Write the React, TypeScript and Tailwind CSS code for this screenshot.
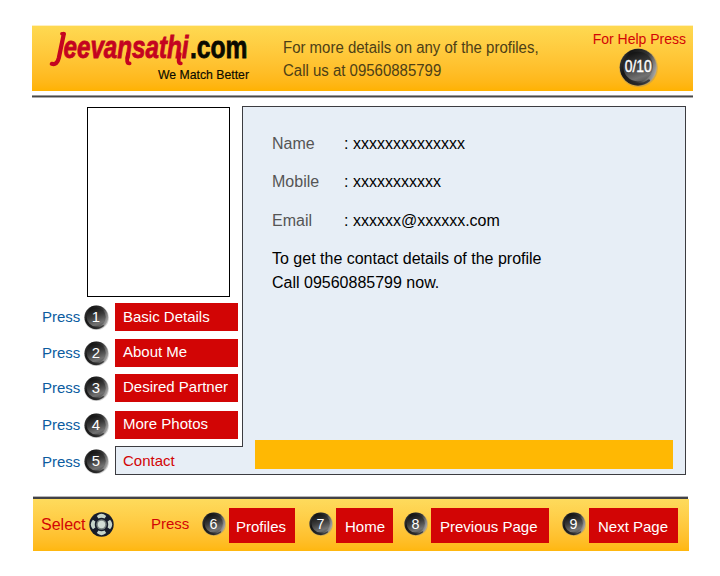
import React from "react";

const rows = [
  { n: "1", label: "Basic Details", gap: "mt-1.5", text: "leading-7" },
  { n: "2", label: "About Me", gap: "mt-2", text: "leading-[26px]" },
  { n: "3", label: "Desired Partner", gap: "mt-[7px]", text: "leading-[26px]" },
  { n: "4", label: "More Photos", gap: "mt-[9px]", text: "leading-[26px]" },
];

const details = [
  { label: "Name", value: "xxxxxxxxxxxxxx", height: "h-[38px]" },
  { label: "Mobile", value: "xxxxxxxxxxx", height: "h-[39px]" },
  { label: "Email", value: "xxxxxx@xxxxxx.com", height: "h-[38px]" },
];

const actions = [
  { n: "6", label: "Profiles", gap: "ml-3", inner: "w-[66px] pl-[7px]" },
  { n: "7", label: "Home", gap: "ml-3.5", inner: "w-[57px] pl-[9px]" },
  { n: "8", label: "Previous Page", gap: "ml-[11px]", inner: "w-[118px] pl-[9px]" },
  { n: "9", label: "Next Page", gap: "ml-[13px]", inner: "w-[89px] pl-[9px]" },
];

function Knob({ n, size = 25 }: { n: string; size?: number }) {
  const help = size > 30;
  return (
    <svg width={size} height={size} viewBox="0 0 26 26" className="block shrink-0 overflow-visible">
      <defs>
        <linearGradient id={`rim${n}`} x1="0" y1="0.25" x2="1" y2="0.6">
          <stop offset="0" stopColor="#3c3c3c" />
          <stop offset="0.2" stopColor="#151515" />
          <stop offset="0.65" stopColor="#333" />
          <stop offset="1" stopColor="#aaa" />
        </linearGradient>
        <linearGradient id={`face${n}`} x1="0.3" y1="0" x2="0.65" y2="1">
          <stop offset="0" stopColor="#111" />
          <stop offset="0.45" stopColor="#3b3b3b" />
          <stop offset="0.85" stopColor="#727272" />
          <stop offset="1" stopColor="#5a5a5a" />
        </linearGradient>
      </defs>
      <circle cx="13" cy="13.2" r="12.9" fill="#888" opacity="0.35" />
      <circle cx="12.8" cy="12.8" r="12.3" fill={`url(#rim${n})`} />
      <path d="M5.5 21.6A11.6 11.6 0 0 0 20 21.6" fill="none" stroke="#222" strokeWidth="1.4" strokeLinecap="round" opacity="0.7" />
      <circle cx="12.7" cy="12.4" r="9.9" fill={`url(#face${n})`} />
      {help ? (
        <text x="12.8" y="16.3" textAnchor="middle" textLength="18" lengthAdjust="spacingAndGlyphs" fill="#fff" stroke="#fff" strokeWidth="0.25" fontSize="11">
          {n}
        </text>
      ) : (
        <text x="12.3" y="18" textAnchor="middle" fill="#fff" fontSize="15.5">
          {n}
        </text>
      )}
    </svg>
  );
}

function Logo() {
  return (
    <svg width="215" height="66" viewBox="32 25 215 66" className="block shrink-0 overflow-visible">
      <g fill="none" stroke="#c40420" strokeLinecap="round" strokeLinejoin="round">
        <path d="M63.8 34 58.8 58Q57 65.5 51.8 63.8" strokeWidth="4.2" />
        <path d="M61.8 33.7H64" strokeWidth="3.4" />
        <path d="M128 54Q125.5 63.6 129.6 63.4" strokeWidth="3.8" />
        <path d="M179.8 54Q177 63.6 180.8 63.4" strokeWidth="3.8" />
      </g>
      <g fontWeight="700" fontSize="31" strokeWidth="0.8">
        <text x="63.5" y="57.6" fontStyle="italic" fill="#c40420" stroke="#c40420" textLength="125" lengthAdjust="spacingAndGlyphs">
          eevansathi
        </text>
        <text x="190" y="57.6" fill="#0a0a00" textLength="57.5" lengthAdjust="spacingAndGlyphs" stroke="#0a0a00">
          .com
        </text>
      </g>
      <text x="158" y="79" fontSize="13" fill="#0a0a00" stroke="#0a0a00" strokeWidth="0.15" textLength="91" lengthAdjust="spacingAndGlyphs">
        We Match Better
      </text>
    </svg>
  );
}

function NavPad() {
  return (
    <svg width="25" height="25" viewBox="0 0 25 25" className="block shrink-0">
      <circle cx="12.5" cy="12.5" r="12.2" fill="#171c2a" />
      <g fill="#c5d3c9">
        <path d="M7.8 3.9Q12.5-.4 17.2 3.9L15.6 6.4Q12.5 5.2 9.4 6.4Z" />
        <path d="M7.8 21.1Q12.5 25.4 17.2 21.1L15.6 18.6Q12.5 19.8 9.4 18.6Z" />
        <path d="M3.9 7.8Q-.4 12.5 3.9 17.2L6.4 15.6Q5.2 12.5 6.4 9.4Z" />
        <path d="M21.1 7.8Q25.4 12.5 21.1 17.2L18.6 15.6Q19.8 12.5 18.6 9.4Z" />
      </g>
      <circle cx="12.5" cy="12.5" r="5.2" fill="#77817f" />
      <circle cx="12.5" cy="12.5" r="3.7" fill="#d2ddd5" />
    </svg>
  );
}

export default function App() {
  return (
    <div className="flex h-[576px] w-[720px] flex-col overflow-hidden bg-white pt-[25px] font-['Liberation_Sans',Arial,sans-serif] text-black">
      <header className="ml-8 flex h-[66px] w-[661px] items-start border-t border-[#fff0c0] bg-linear-to-b from-[#fed951] to-[#ffb200]">
        <div className="-mt-px">
          <Logo />
        </div>
        <div className="mt-[10px] ml-9 w-[256px] shrink-0 origin-left scale-x-[0.936] text-base leading-[23px] whitespace-nowrap text-[#4d4016]">
          For more details on any of the profiles,
          <br />
          Call us at 09560885799
        </div>
        <div className="ml-auto flex shrink-0 flex-col pr-[7px]">
          <span className="mt-[5px] text-sm leading-4 text-[#d30505]">For Help Press</span>
          <div className="mt-px ml-[26px]">
            <Knob n="0/10" size={39} />
          </div>
        </div>
      </header>
      <div className="mt-1 ml-8 h-[3px] w-[661px] shrink-0 border-t border-b border-t-[#999] border-b-[#aaa] bg-[#484848]" />

      <main className="mt-2 flex h-[369px] shrink-0">
        <aside className="relative z-10 w-[243px] shrink-0">
          <div className="mt-px ml-[87px] h-[190px] w-[143px] border border-black bg-white" />
          {rows.map((row) => (
            <div key={row.n} className={`${row.gap} flex h-7 items-center pl-[42px] text-[15px]`}>
              <span className="w-[42px] shrink-0 text-[#0b5c9f]">Press</span>
              <Knob n={row.n} />
              <div className={`${row.text} ml-1.5 h-7 w-[123px] bg-[#d20505] pl-2 whitespace-nowrap text-white`}>{row.label}</div>
            </div>
          ))}
          <div className="mt-[7px] flex h-[29px] pl-[42px] text-[15px]">
            <span className="w-[42px] shrink-0 leading-8 text-[#0b5c9f]">Press</span>
            <div className="mt-[3px]">
              <Knob n="5" />
            </div>
            <div className="ml-1.5 w-[128px] border border-r-0 border-[#3c3c40] bg-[#e7eef6] pl-[7px] leading-7 text-[#d20505]">Contact</div>
          </div>
        </aside>
        <section className="-ml-px flex w-[444px] shrink-0 flex-col border border-[#3c3c40] bg-[#e7eef6] pt-[25px] text-base">
          {details.map((item) => (
            <div key={item.label} className={`${item.height} flex pl-[29px] leading-6`}>
              <span className="w-[72px] text-[#555]">{item.label}</span>
              <span>: {item.value}</span>
            </div>
          ))}
          <p className="pl-[29px] leading-6">
            To get the contact details of the profile
            <br />
            Call 09560885799 now.
          </p>
          <div className="mt-auto mb-[5px] ml-3 h-[29px] w-[418px] bg-[#ffb803]" />
        </section>
      </main>

      <footer className="mt-[21px] ml-[33px] w-[656px] shrink-0">
        <div className="h-[3px] w-[655px] border-t border-[#b5b5b8] bg-[#424246]" />
        <div className="flex h-[52px] items-start bg-linear-to-b from-[#fedb5c] to-[#ffb70d] pl-2">
          <span className="mt-3.5 w-12 shrink-0 text-base leading-6 text-[#d20505]">Select</span>
          <div className="mt-[13px]">
            <NavPad />
          </div>
          <span className="mt-[13px] ml-[37px] w-[39px] shrink-0 text-[15px] leading-6 text-[#d20505]">Press</span>
          {actions.map((action) => (
            <div key={action.n} className={`${action.gap} flex`}>
              <div className="mt-[13px]">
                <Knob n={action.n} size={24} />
              </div>
              <div className={`${action.inner} mt-[9px] ml-[3px] h-[35px] bg-[#d20505] text-[15px] leading-[37px] whitespace-nowrap text-white`}>
                {action.label}
              </div>
            </div>
          ))}
        </div>
      </footer>
    </div>
  );
}
